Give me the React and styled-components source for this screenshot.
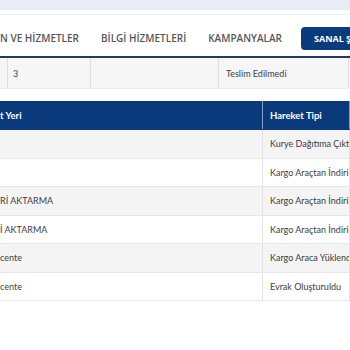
import React from 'react';
import styled, { createGlobalStyle } from 'styled-components';

const GlobalStyle = createGlobalStyle`
    html, body {
        margin:0;
        padding:0;
        background:#fff;
    }
`;

const Page = styled.div`
    width:350px;
    height:350px;
    overflow:hidden;
    background:#fff;
`;

const TopBand = styled.div`
    height:10px;
    background:#eaecf5;
`;

const NavBar = styled.nav`
    margin-top:4px;
    border-top:1px solid #efefef;
    height:42px;
    padding-top:5px;
    box-sizing:border-box;
    display:flex;
    align-items:center;
    gap:22px;
    white-space:nowrap;
    font-family:"Open Sans", sans-serif;
`;

const NavItem = styled.span`
    font-size:10px;
    font-weight:600;
    color:#575757;
`;

const PortalButton = styled.button`
    flex-shrink:0;
    margin-left:-3px;
    height:23px;
    padding:0 13px;
    border:none;
    border-radius:4px;
    background:#0a3b7c;
    color:#fff;
    font-family:"Open Sans", sans-serif;
    font-size:9px;
    font-weight:700;
`;

const SummaryTable = styled.div`
    border-top:2px solid #223a66;
    display:grid;
    grid-template-columns:6px 85px 128px 130px 1fr;
    height:30px;
    background:#f6f6f6;
    border-bottom:1px solid #ececec;
    font-family:Lato, sans-serif;
    font-size:9px;
    color:#3d3d3d;
`;

const SummaryCell = styled.div`
    display:flex;
    align-items:center;
    padding-left:7px;
    border-right:1px solid #dedede;
`;

const MovesTable = styled.div`
    margin-top:12px;
    font-family:Lato, sans-serif;
`;

const Row = styled.div`
    display:grid;
    grid-template-columns:263px 1fr;
    height:${p => p.$head ? '29px' : '28.5px'};
    box-sizing:border-box;
    background:${p => p.$head ? '#0a3a7b' : p.$odd ? '#f4f4f4' : '#fff'};
    border-bottom:1px solid ${p => p.$head ? '#0a3a7b' : '#e6e6e6'};
`;

const Cell = styled.div`
    display:flex;
    align-items:center;
    white-space:nowrap;
    overflow:hidden;
    padding-left:${p => p.$left ? '0' : '7px'};
    border-right:1px solid ${p => p.$head ? '#7e9cc8' : '#e2e2e2'};
    font-size:${p => p.$head ? '9.5px' : '9px'};
    font-weight:${p => p.$head ? 700 : 400};
    color:${p => p.$head ? '#fff' : '#3d3d3d'};
`;

const moves = [
    ['', 'Kurye Dağıtıma Çıktı'],
    ['', 'Kargo Araçtan İndirildi'],
    ['Rİ AKTARMA', 'Kargo Araçtan İndirildi'],
    ['İ AKTARMA', 'Kargo Araçtan İndirildi'],
    ['cente', 'Kargo Araca Yüklendi'],
    ['cente', 'Evrak Oluşturuldu'],
];

const App = () => (
    <Page>
        <GlobalStyle />
        <TopBand />
        <NavBar>
            <NavItem>N VE HİZMETLER</NavItem>
            <NavItem>BİLGİ HİZMETLERİ</NavItem>
            <NavItem>KAMPANYALAR</NavItem>
            <PortalButton>SANAL ŞUBE</PortalButton>
        </NavBar>
        <SummaryTable>
            <SummaryCell />
            <SummaryCell>3</SummaryCell>
            <SummaryCell />
            <SummaryCell>Teslim Edilmedi</SummaryCell>
            <SummaryCell />
        </SummaryTable>
        <MovesTable>
            <Row $head>
                <Cell $head $left>t Yeri</Cell>
                <Cell $head>Hareket Tipi</Cell>
            </Row>
            {moves.map(([place, type], i) => (
                <Row key={i} $odd={i % 2 === 0}>
                    <Cell $left>{place}</Cell>
                    <Cell>{type}</Cell>
                </Row>
            ))}
        </MovesTable>
    </Page>
);

export default App;
